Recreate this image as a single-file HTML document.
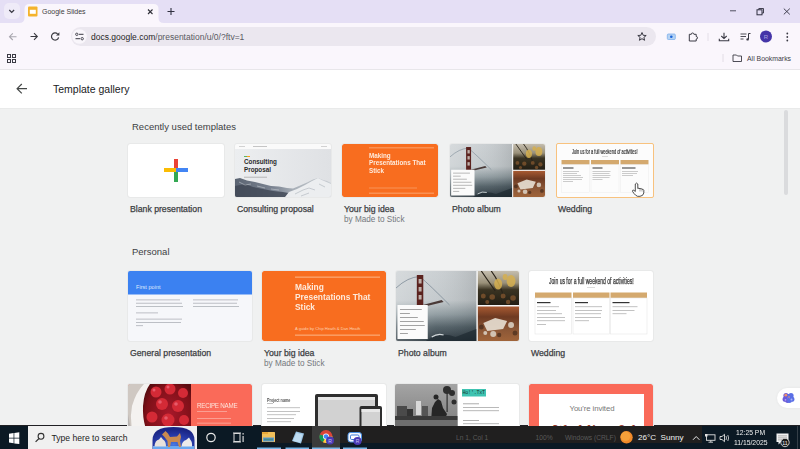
<!DOCTYPE html>
<html><head><meta charset="utf-8">
<style>
*{margin:0;padding:0;box-sizing:border-box}
html,body{width:800px;height:449px;overflow:hidden;font-family:"Liberation Sans",sans-serif;background:#f0f1f1;position:relative}
.a{position:absolute}
#tabs{left:0;top:0;width:800px;height:23px;background:#e5dff5}
#toolbar{left:0;top:22.5px;width:800px;height:47px;background:#faf6fc}
#omni{left:71px;top:27px;width:585px;height:19px;border-radius:10px;background:#ebe7ef}
#header{left:0;top:70px;width:800px;height:38px;background:#fff}
#gallery{left:0;top:108px;width:800px;height:318px;background:#f0f1f1;box-shadow:inset 0 1px 1px rgba(0,0,0,0.03)}
#taskbar{left:0;top:425px;width:800px;height:24px;background:#202024}
.t{white-space:nowrap;color:#202124}
.lbl{position:absolute;white-space:nowrap;font-size:8.7px;color:#3c4043;-webkit-text-stroke:0.25px #3c4043}
.sub{position:absolute;white-space:nowrap;font-size:8.2px;color:#74787d;margin-top:1px}
.card{position:absolute;background:#fff;border-radius:2px;overflow:hidden;outline:1px solid #e8e9e9}
</style></head><body>
<svg width="0" height="0" style="position:absolute">
 <defs>
  <linearGradient id="fog" x1="0" y1="0" x2="0" y2="1"><stop offset="0" stop-color="#c9ced1"/><stop offset="0.42" stop-color="#c2c8cb"/><stop offset="0.62" stop-color="#8e9a9f"/><stop offset="0.8" stop-color="#4f5d64"/><stop offset="1" stop-color="#26323a"/></linearGradient>
  <linearGradient id="fog2" x1="0" y1="0" x2="1" y2="0"><stop offset="0" stop-color="#fff" stop-opacity="0.25"/><stop offset="0.5" stop-color="#fff" stop-opacity="0.05"/><stop offset="1" stop-color="#000" stop-opacity="0.1"/></linearGradient>
  <linearGradient id="leaf" x1="0" y1="0" x2="0" y2="1"><stop offset="0" stop-color="#c4bdae"/><stop offset="0.35" stop-color="#9a917a"/><stop offset="0.55" stop-color="#3a3322"/><stop offset="1" stop-color="#231e14"/></linearGradient>
  <linearGradient id="tbl" x1="0" y1="0" x2="0" y2="1"><stop offset="0" stop-color="#a85a32"/><stop offset="0.3" stop-color="#6e3a22"/><stop offset="0.65" stop-color="#8a5636"/><stop offset="1" stop-color="#a0643a"/></linearGradient>
  <symbol id="album" viewBox="0 0 124 70">
   <rect x="0" y="0" width="81" height="70" fill="url(#fog)"/>
   <rect x="0" y="0" width="81" height="70" fill="url(#fog2)"/>
   <path d="M30 70 Q45 60 60 66 L81 58 V70 Z" fill="#1e2a30" opacity="0.7"/>
   <path d="M36 66 Q42 62 48 64" stroke="#d0d6d8" stroke-width="1.2" fill="none"/>
   <path d="M0 17 Q12 6 24 5.5 Q34 14 54 34" fill="none" stroke="#7e8c98" stroke-width="0.8"/>
   <path d="M27 34 L46 29 L48 31 L27 36 Z" fill="#4a3a38"/>
   <rect x="21" y="4" width="6.5" height="31" fill="#5b231f"/>
   <rect x="22.8" y="8" width="3" height="4.5" fill="#c0b0aa"/><rect x="22.8" y="16" width="3" height="4.5" fill="#c0b0aa"/><rect x="22.8" y="24" width="3" height="4.5" fill="#c0b0aa"/>
   <rect x="1.5" y="34" width="30.5" height="34" fill="#fbfbfb"/>
   <g fill="#8e8e8e"><rect x="4" y="38" width="22" height="0.8"/><rect x="4" y="42" width="10" height="0.8"/><rect x="4" y="46" width="18" height="0.8"/><rect x="4" y="50" width="24" height="0.8"/><rect x="4" y="54" width="25" height="0.8"/><rect x="4" y="58" width="16" height="0.8"/><rect x="4" y="62" width="8" height="0.8"/></g>
   <rect x="82.5" y="0" width="41.5" height="34" fill="url(#leaf)"/>
   <path d="M86 0 L100 20 M96 0 Q104 10 110 30" stroke="#2a241a" stroke-width="1.2" fill="none"/>
   <g fill="#d6b050" opacity="0.85"><ellipse cx="103" cy="13" rx="4" ry="5.5"/><ellipse cx="116" cy="10" rx="4.5" ry="6"/><ellipse cx="110" cy="6" rx="2.5" ry="3"/></g>
   <g fill="#8a5a30" opacity="0.7"><circle cx="88" cy="25" r="2.5"/><circle cx="97" cy="26" r="2.8"/><circle cx="108" cy="25" r="2.5"/><circle cx="118" cy="27" r="2.8"/><circle cx="92" cy="31" r="2"/><circle cx="113" cy="31" r="2.2"/></g>
   <rect x="82.5" y="35.5" width="41.5" height="34.5" fill="url(#tbl)"/>
   <path d="M88 52 L100 47 L112 50 L108 58 L92 60 Z" fill="#e8e0d4" opacity="0.9"/>
   <g fill="#ddd5c8" opacity="0.85"><circle cx="116" cy="54" r="3"/><circle cx="98" cy="63" r="3"/><circle cx="90" cy="62" r="2"/></g>
   <g fill="#3a2418" opacity="0.6"><circle cx="86" cy="56" r="2.5"/><circle cx="104" cy="64" r="2.2"/><circle cx="120" cy="62" r="2.5"/></g>
  </symbol>
 </defs>
</svg>
<div id="tabs" class="a"></div>
<div id="toolbar" class="a"></div>
<div id="omni" class="a"></div>
<div id="header" class="a"></div>
<div id="gallery" class="a"></div>
<div id="taskbar" class="a"></div>

<!-- tab -->
<div class="a" style="left:4px;top:3px;width:16px;height:16px;border-radius:5px;background:#efebf8"></div>
<svg class="a" style="left:0;top:0" width="800" height="70" viewBox="0 0 800 70">
  <path d="M9.3 10 L11.7 12.4 L14.1 10" fill="none" stroke="#3a3a44" stroke-width="1.3"/>
  <path d="M19 23 Q24.5 23 24.5 18 L24.5 9 Q24.5 4 29.5 4 L153.5 4 Q158.5 4 158.5 9 L158.5 18 Q158.5 23 164 23 Z" fill="#faf6fc"/>
  <rect x="28" y="6.5" width="9.5" height="10" rx="1" fill="#f4b32c"/>
  <rect x="29.8" y="9.8" width="6" height="4" fill="#fff"/>
  <path d="M148 9.5 L152.5 14 M152.5 9.5 L148 14" stroke="#303038" stroke-width="1.1"/>
  <path d="M167.5 11.5 H174.5 M171 8 V15" stroke="#303040" stroke-width="1.1"/>
  <path d="M730 10.8 H736" stroke="#404050" stroke-width="0.9"/>
  <rect x="757" y="9.8" width="5" height="5" fill="none" stroke="#303040" stroke-width="1"/>
  <path d="M758.8 9.8 V8.5 H763.5 V13 H762" fill="none" stroke="#303040" stroke-width="0.9"/>
  <path d="M783.8 8.6 L789.8 14.4 M789.8 8.6 L783.8 14.4" stroke="#303040" stroke-width="0.9"/>
  <!-- nav -->
  <path d="M9.5 36.7 H16.5 M12.8 33.3 L9.5 36.7 L12.8 40" fill="none" stroke="#a8a6ae" stroke-width="1.1"/>
  <path d="M30.5 36.5 H37.3 M34 33.2 L37.3 36.5 L34 39.8" fill="none" stroke="#3a3a40" stroke-width="1.1"/>
  <path d="M58.6 37.3 A3.6 3.6 0 1 1 57.6 33.9" fill="none" stroke="#3a3a40" stroke-width="1.2"/>
  <path d="M59.4 32.2 V35.6 H56 Z" fill="#3a3a40"/>
  <!-- site info -->
  <circle cx="79.5" cy="36.5" r="7.3" fill="#f9f6fb"/>
  <path d="M79 34.3 H83.5 M75.5 38.7 H80" stroke="#3a3a44" stroke-width="1"/>
  <circle cx="76.8" cy="34.3" r="1.2" fill="none" stroke="#3a3a44" stroke-width="0.9"/>
  <circle cx="82.2" cy="38.7" r="1.2" fill="none" stroke="#3a3a44" stroke-width="0.9"/>
  <!-- star -->
  <path d="M642 32.5 L643.2 35.3 L646.2 35.5 L643.9 37.4 L644.6 40.3 L642 38.7 L639.4 40.3 L640.1 37.4 L637.8 35.5 L640.8 35.3 Z" fill="none" stroke="#3a3a44" stroke-width="1"/>
  <!-- blue icon -->
  <rect x="667.3" y="34" width="8" height="5.5" rx="1" fill="#b7d3f3" stroke="#7fb0ec" stroke-width="0.8"/>
  <circle cx="671.3" cy="36.8" r="1.3" fill="#1a64d8"/>
  <!-- puzzle -->
  <path d="M689.3 34.3 H691.3 A1.3 1.3 0 0 1 693.9 34.3 H696.2 V36.5 A1.3 1.3 0 0 1 696.2 39.1 V41 H689.3 Z" fill="none" stroke="#3a3a44" stroke-width="1"/>
  <path d="M708 33 V41" stroke="#dedae3" stroke-width="0.8"/>
  <!-- download -->
  <path d="M724 32.8 V38.5 M721.3 36 L724 38.6 L726.7 36 M719.3 38.8 V40.7 H728.7 V38.8" fill="none" stroke="#3a3a44" stroke-width="1.1"/>
  <!-- media -->
  <path d="M740.5 34 H746.5 M740.5 36.5 H746 M740.5 39 H743.5" stroke="#3a3a44" stroke-width="0.9"/>
  <path d="M748.5 33.5 V39.2 M748.5 33.5 H750.5" stroke="#3a3a44" stroke-width="1"/>
  <circle cx="747.6" cy="39.4" r="1.2" fill="#3a3a44"/>
  <!-- avatar -->
  <circle cx="766" cy="36.5" r="6" fill="#4535a8"/>
  <text x="766" y="39" font-size="6" text-anchor="middle" fill="#a9a0e0" font-family="Liberation Sans">R</text>
  <!-- dots -->
  <circle cx="787.3" cy="33.5" r="0.9" fill="#3a3a44"/>
  <circle cx="787.3" cy="37" r="0.9" fill="#3a3a44"/>
  <circle cx="787.3" cy="40.5" r="0.9" fill="#3a3a44"/>
  <!-- apps -->
  <g fill="none" stroke="#3a3a44" stroke-width="1">
  <rect x="7.5" y="54.5" width="3" height="3"/><rect x="12.5" y="54.5" width="3" height="3"/>
  <rect x="7.5" y="59.5" width="3" height="3"/><rect x="12.5" y="59.5" width="3" height="3"/>
  </g>
  <path d="M723 54 V62" stroke="#dcd8e0" stroke-width="0.8"/>
  <path d="M733 55 H736.5 L737.5 56 H741.5 V61.5 H733 Z" fill="none" stroke="#3a3a44" stroke-width="0.9"/>
  <path d="M0 69.5 H800" stroke="#e8e6ea" stroke-width="1"/>
</svg>
<div class="a t" style="left:42px;top:7.5px;font-size:7px;color:#3c3c3c">Google Slides</div>
<div class="a t" style="left:747px;top:54.7px;font-size:6.9px;color:#3c3c44">All Bookmarks</div>

<!-- url -->
<div class="a t" style="left:91px;top:31.7px;font-size:8.5px;color:#1f1f1f">docs.google.com<span style="color:#5a5a62">/presentation/u/0/?ftv=1</span></div>

<!-- header -->
<svg class="a" style="left:0;top:70px" width="40" height="37"><path d="M17.3 18.7 H27 M21.8 14 L17.1 18.7 L21.8 23.4" fill="none" stroke="#444746" stroke-width="1.2"/></svg>
<div class="a t" style="left:53px;top:83px;font-size:10.5px;color:#202124">Template gallery</div>
<div class="a" style="left:783.7px;top:110px;width:4.5px;height:85px;border-radius:3px;background:#dadbdd"></div>

<!-- recently used -->
<div class="a t" style="left:132px;top:121px;font-size:9.5px;color:#3c4043">Recently used templates</div>

<div class="card" style="left:128px;top:144px;width:96px;height:53px">
 <svg width="96" height="53" style="position:absolute;left:0;top:0">
  <rect x="46" y="15" width="4" height="11" fill="#ea4335"/>
  <rect x="46" y="26" width="4" height="12" fill="#34a853"/>
  <rect x="36" y="24" width="12" height="4" fill="#fbbc04"/>
  <rect x="48" y="24" width="12" height="4" fill="#4285f4"/>
 </svg>
</div>
<div class="a lbl" style="left:130px;top:204px">Blank presentation</div>

<div class="card" style="left:235px;top:144px;width:96px;height:53px;background:linear-gradient(90deg,#eceef0,#dfe1e4)">
 <svg width="96" height="53" style="position:absolute;left:0;top:0">
  <rect x="0" y="0" width="96" height="5" fill="#fafafa"/>
  <rect x="4" y="2" width="6" height="0.8" fill="#c8c8c8"/><rect x="18" y="2" width="14" height="0.8" fill="#b8b8b8"/><rect x="86" y="2" width="6" height="0.8" fill="#c8c8c8"/>
  <rect x="9" y="12" width="3" height="0.9" fill="#4caf50"/><rect x="12" y="12" width="3" height="0.9" fill="#ff9800"/>
  <rect x="9" y="32.8" width="23" height="0.7" fill="#a0a0a0"/>
  <defs><linearGradient id="mt" x1="0" y1="0" x2="1" y2="0"><stop offset="0" stop-color="#5b6472"/><stop offset="0.4" stop-color="#7b8492"/><stop offset="0.62" stop-color="#a9b0b8"/><stop offset="1" stop-color="#c9ced3"/></linearGradient></defs>
  <path d="M0 35 L5 34 L12 36.5 L20 38 L28 40 L36 42 L44 42.5 L52 44 L58 44.5 L64 42 L72 38.5 L78 35.5 L83 34 L88 36 L92 37 L96 39 V53 H0 Z" fill="url(#mt)"/>
  <path d="M0 42 L10 40 L18 43 L28 45 L38 47 L48 48 L56 49.5 L60 53 L0 53 Z" fill="#3e4654" opacity="0.8"/>
  <path d="M54 48 L62 45 L70 41 L77 37 L83 34 L88 36.5 L96 40 V53 H50 Z" fill="#eceef0"/>
  <path d="M60 50 L68 46 L74 44 L80 46 M84 40 L90 43 M66 52 L74 49" fill="none" stroke="#b4bac1" stroke-width="0.7"/>
  <path d="M4 38 L10 41 L16 40 M22 42 L30 44 M36 45 L44 46" fill="none" stroke="#c7ccd2" stroke-width="0.7" opacity="0.8"/>
 </svg>
 <div class="a" style="left:9px;top:14px;font-size:6.3px;font-weight:bold;color:#2a2a2a;line-height:7.5px">Consulting<br>Proposal</div>
</div>
<div class="a lbl" style="left:237px;top:204px">Consulting proposal</div>

<div class="card" style="left:342px;top:144px;width:96px;height:53px;background:#f86d1f">
 <svg width="96" height="53" style="position:absolute;left:0;top:0">
  <rect x="27" y="3.6" width="65" height="0.6" fill="#fcc9a4"/>
  <rect x="27" y="48.8" width="65" height="0.6" fill="#fcc9a4"/>
  <rect x="27" y="43.7" width="48" height="0.6" fill="#fbbf95" opacity="0.8"/>
 </svg>
 <div class="a" style="left:27px;top:7.7px;font-size:6.3px;font-weight:bold;color:#feeadb;line-height:6.75px;white-space:nowrap;transform:scaleY(1.1);transform-origin:0 0">Making<br>Presentations That<br>Stick</div>
</div>
<div class="a lbl" style="left:344px;top:204px">Your big idea</div>
<div class="a sub" style="left:344px;top:214px">by Made to Stick</div>

<div class="card" style="left:450px;top:144px;width:95px;height:53px;background:#f6f6f6">
 <svg width="95" height="53" style="position:absolute;left:0;top:0" viewBox="0 0 124 70" preserveAspectRatio="none"><use href="#album"/></svg>
</div>
<div class="a lbl" style="left:452px;top:204px">Photo album</div>

<div class="card" style="left:557px;top:144px;width:96px;height:53px;outline:1.5px solid #f8c27e;background:#fcfcfc;border-radius:1px">
 <div class="a" style="left:15px;top:4px;font-size:7px;color:#333;white-space:nowrap;transform:scaleX(0.558);-webkit-text-stroke:0.2px #333;transform-origin:0 0">Join us for a full weekend of activities!</div>
 <svg width="96" height="54" style="position:absolute;left:0;top:0">
  <rect x="45" y="12.5" width="6" height="0.5" fill="#bbb"/>
  <g fill="#d4a96e"><rect x="4.5" y="16" width="28" height="4.5"/><rect x="34" y="16" width="28" height="4.5"/><rect x="63.5" y="16" width="28" height="4.5"/></g>
  <g fill="none" stroke="#ececec" stroke-width="0.5"><rect x="4.5" y="20.5" width="28" height="28"/><rect x="34" y="20.5" width="28" height="28"/><rect x="63.5" y="20.5" width="28" height="28"/></g>
  <g fill="#333"><rect x="6" y="23.5" width="10.5" height="1"/><rect x="35.5" y="23.5" width="10" height="1"/><rect x="65" y="23.5" width="13.5" height="1"/></g>
  <g fill="#9a9a9a">
   <rect x="6" y="27" width="16" height="0.5"/><rect x="6" y="29" width="14" height="0.5"/><rect x="6" y="31" width="18" height="0.5"/><rect x="6" y="33" width="20" height="0.5"/><rect x="6" y="35" width="19" height="0.5"/><rect x="6" y="37" width="10" height="0.5"/>
   <rect x="35.5" y="27" width="18" height="0.5"/><rect x="35.5" y="29" width="17" height="0.5"/><rect x="35.5" y="31" width="18" height="0.5"/><rect x="35.5" y="33" width="17" height="0.5"/><rect x="35.5" y="35" width="10" height="0.5"/>
   <rect x="65" y="27" width="16" height="0.5"/><rect x="65" y="29" width="15" height="0.5"/><rect x="65" y="31" width="11" height="0.5"/>
  </g>
  <path d="M78.3 47 V40 Q79.5 38.2 80.8 40 V44.5 Q82 43.6 83 44.8 Q84.2 44 85 45.3 Q86.2 44.8 86.8 46.2 V49 Q86.2 52 83 52.3 H80.5 Q78.5 51.5 77 49.5 L75.5 47.3 Q75.3 45.8 76.8 46.2 L78.3 47.5 Z" fill="#fff" stroke="#222" stroke-width="0.8"/>
  <path d="M83 44.8 V47.5 M85 45.3 V47.5" stroke="#555" stroke-width="0.5"/>
 </svg>
</div>
<div class="a lbl" style="left:558px;top:204px">Wedding</div>

<!-- personal -->
<div class="a t" style="left:132px;top:246px;font-size:9.5px;color:#3c4043">Personal</div>

<div class="card" style="left:128px;top:271px;width:124px;height:70px;background:#f6f7fa">
 <svg width="124" height="70" style="position:absolute;left:0;top:0">
  <rect x="0" y="0" width="124" height="23.5" fill="#3b81f1"/>
  <g fill="#aeb1b8">
   <rect x="8" y="28.5" width="44" height="0.8"/><rect x="8" y="31.8" width="46" height="0.8"/><rect x="8" y="35.1" width="47" height="0.8"/>
   <rect x="8" y="41.5" width="22" height="0.8"/>
   <rect x="8" y="47.7" width="46" height="0.8"/><rect x="8" y="51" width="45" height="0.8"/><rect x="8" y="54.3" width="7" height="0.8"/>
   <rect x="65" y="28.5" width="45" height="0.8"/><rect x="65" y="31.8" width="44" height="0.8"/><rect x="65" y="35.1" width="46" height="0.8"/>
  </g>
 </svg>
 <div class="a t" style="left:8px;top:13.2px;font-size:5.6px;color:#dce7fd">First point</div>
</div>
<div class="a lbl" style="left:130px;top:348px">General presentation</div>

<div class="card" style="left:262px;top:271px;width:124px;height:70px;background:#f86d1f">
 <svg width="124" height="70" style="position:absolute;left:0;top:0">
  <rect x="33" y="5.7" width="85" height="0.8" fill="#fcc9a4"/>
  <rect x="33" y="63.7" width="85" height="0.8" fill="#fcc9a4"/>
 </svg>
 <div class="a" style="left:33px;top:10.5px;font-size:8.4px;font-weight:bold;color:#feeadb;line-height:9.7px;transform:scaleY(1.08);transform-origin:0 0;white-space:nowrap">Making<br>Presentations That<br>Stick</div>
 <div class="a" style="left:33px;top:54.5px;font-size:4.1px;color:#fcd1b2;white-space:nowrap">A guide by Chip Heath &amp; Dan Heath</div>
</div>
<div class="a lbl" style="left:264px;top:348px">Your big idea</div>
<div class="a sub" style="left:264px;top:358px">by Made to Stick</div>

<div class="card" style="left:396px;top:271px;width:123px;height:70px;background:#f6f6f6">
 <svg width="123" height="70" style="position:absolute;left:0;top:0" viewBox="0 0 124 70" preserveAspectRatio="none"><use href="#album"/></svg>
</div>
<div class="a lbl" style="left:398px;top:348px">Photo album</div>

<div class="card" style="left:529px;top:271px;width:124px;height:70px">
 <div class="a" style="left:20px;top:5px;font-size:8.5px;color:#333;white-space:nowrap;transform:scaleX(0.593);-webkit-text-stroke:0.25px #333;transform-origin:0 0">Join us for a full weekend of activities!</div>
 <svg width="124" height="70" style="position:absolute;left:0;top:0">
  <rect x="58" y="16.5" width="8" height="0.5" fill="#bbb"/>
  <g fill="#d4a96e"><rect x="6" y="21.5" width="36.5" height="5.5"/><rect x="44" y="21.5" width="36.5" height="5.5"/><rect x="81.5" y="21.5" width="36.5" height="5.5"/></g>
  <g fill="none" stroke="#e6e6e6" stroke-width="0.6"><rect x="6" y="27" width="36.5" height="36"/><rect x="44" y="27" width="36.5" height="36"/><rect x="81.5" y="27" width="36.5" height="36"/></g>
  <g fill="#333"><rect x="8" y="31" width="13.5" height="1.2"/><rect x="46" y="31" width="13" height="1.2"/><rect x="83.5" y="31" width="17" height="1.2"/></g>
  <g fill="#9a9a9a">
   <rect x="8" y="35.5" width="22" height="0.6"/><rect x="8" y="39" width="19" height="0.6"/><rect x="8" y="42.5" width="25" height="0.6"/><rect x="8" y="46" width="28" height="0.6"/><rect x="8" y="49.5" width="28" height="0.6"/><rect x="8" y="53" width="9" height="0.6"/>
   <rect x="46" y="35.5" width="27" height="0.6"/><rect x="46" y="39" width="27" height="0.6"/><rect x="46" y="42.5" width="26" height="0.6"/><rect x="46" y="46" width="26" height="0.6"/><rect x="46" y="49.5" width="14" height="0.6"/>
   <rect x="83.5" y="35.5" width="25" height="0.6"/><rect x="83.5" y="39" width="22" height="0.6"/><rect x="83.5" y="42.5" width="14" height="0.6"/>
  </g>
 </svg>
</div>
<div class="a lbl" style="left:531px;top:348px">Wedding</div>

<!-- third row -->
<div class="card" style="left:128px;top:384px;width:124px;height:60px;background:#fa6a59">
 <svg width="124" height="60" style="position:absolute;left:0;top:0">
  <defs><radialGradient id="rb" cx="0.55" cy="0.5" r="0.6"><stop offset="0" stop-color="#a8182a"/><stop offset="0.8" stop-color="#7e1018"/><stop offset="1" stop-color="#5a0c10"/></radialGradient></defs>
  <rect x="0" y="0" width="63" height="60" fill="#cfc8c2"/>
  <path d="M0 0 H63 V60 H10 Q0 42 4 22 Q8 8 16 0 Z" fill="#f4f2f0"/>
  <path d="M0 30 Q2 48 12 60 H0 Z" fill="#b8b4b2"/>
  <path d="M20 0 H63 V60 H26 Q14 44 15 22 Q16 8 22 0 Z" fill="url(#rb)"/>
  <g fill="#d42a36" style="filter:blur(0.6px)"><circle cx="28" cy="8" r="5.5"/><circle cx="42" cy="5" r="5.5"/><circle cx="55" cy="9" r="5"/><circle cx="34" cy="20" r="6"/><circle cx="50" cy="22" r="6"/><circle cx="24" cy="33" r="5.5"/><circle cx="40" cy="36" r="6.5"/><circle cx="56" cy="36" r="5"/><circle cx="32" cy="50" r="6"/><circle cx="48" cy="52" r="6"/></g>
  <g fill="#f07080" opacity="0.7"><circle cx="26" cy="6" r="1.5"/><circle cx="40" cy="3" r="1.5"/><circle cx="32" cy="18" r="1.8"/><circle cx="48" cy="20" r="1.8"/><circle cx="38" cy="34" r="1.8"/><circle cx="30" cy="48" r="1.8"/><circle cx="46" cy="50" r="1.5"/></g>
  <g fill="#fde0d8" opacity="0.75"><rect x="69" y="27.3" width="30" height="0.6"/><rect x="69" y="34.3" width="34" height="0.6"/><rect x="69" y="38.8" width="34" height="0.6"/></g>
 </svg>
 <div class="a t" style="left:68.5px;top:17px;font-size:7.8px;color:#fde3da;letter-spacing:-0.3px;transform:scaleX(0.8);transform-origin:0 0">RECIPE NAME</div>
</div>

<div class="card" style="left:262px;top:384px;width:124px;height:60px">
 <svg width="124" height="60" style="position:absolute;left:0;top:0">
  <rect x="5" y="19" width="6" height="0.6" fill="#999"/>
  <g fill="#9a9a9a"><rect x="5" y="23.5" width="33" height="0.6"/><rect x="5" y="27" width="33" height="0.6"/><rect x="5" y="30.5" width="29" height="0.6"/><rect x="5" y="34" width="27" height="0.6"/><rect x="5" y="37.5" width="24" height="0.6"/></g>
  <rect x="53" y="10" width="63" height="50" rx="2" fill="#2e2e2e"/>
  <rect x="56" y="13" width="57" height="47" fill="#d2d2d2"/>
  <rect x="56" y="13" width="57" height="3" fill="#e6e6e6"/>
  <rect x="97.5" y="22" width="22.5" height="38" rx="2" fill="#2e2e2e"/>
  <rect x="99.5" y="25" width="18.5" height="35" fill="#d2d2d2"/>
  <rect x="99.5" y="25" width="18.5" height="3" fill="#e8e8e8"/>
 </svg>
 <div class="a t" style="left:5px;top:11.5px;font-size:6.2px;font-weight:bold;color:#555;transform:scaleX(0.6);transform-origin:0 0">Project name</div>
</div>

<div class="card" style="left:395px;top:384px;width:124px;height:60px">
 <svg width="124" height="60" style="position:absolute;left:0;top:0">
  <defs><linearGradient id="sk" x1="0" y1="0" x2="0" y2="1"><stop offset="0" stop-color="#a4a4a4"/><stop offset="0.5" stop-color="#8a8a8a"/><stop offset="1" stop-color="#5a5a5a"/></linearGradient></defs>
  <rect x="0" y="0" width="62.5" height="60" fill="url(#sk)"/>
  <g fill="#2e2e2e"><circle cx="52" cy="6" r="4"/><circle cx="57" cy="9" r="3"/><rect x="51.5" y="8" width="1.2" height="20"/><circle cx="59" cy="18" r="2.5"/></g>
  <rect x="2" y="22" width="10" height="10" fill="#4a4a4a"/><rect x="12" y="25" width="6" height="7" fill="#333"/><rect x="21" y="17" width="5" height="14" fill="#d8d8d8"/><rect x="27" y="22" width="6" height="10" fill="#555"/>
  <path d="M36 38 L37 24 L40 18 L43 15 L46 17 L48 24 L52 30 L49 38 Z" fill="#262626"/>
  <circle cx="41" cy="13" r="2.5" fill="#262626"/>
  <rect x="0" y="32" width="62.5" height="4" fill="#3a3a3a"/>
  <path d="M0 36 H62.5 V60 H0 Z" fill="#6e6e6e"/>
  <path d="M10 42 H50 L46 48 H14 Z" fill="#8e8e8e"/>
  <rect x="67" y="5" width="24" height="7.5" fill="#3fc3b1"/>
  <g fill="#8a8a8a"><rect x="68" y="19.5" width="16" height="0.7"/><rect x="68" y="23" width="36" height="0.6"/><rect x="68" y="26.5" width="36" height="0.6"/><rect x="68" y="36" width="16" height="0.7"/><rect x="68" y="39.5" width="36" height="0.6"/></g>
 </svg>
 <div class="a t" style="left:67.5px;top:6px;font-size:5px;color:#1a3a36;font-family:'Liberation Mono',monospace;letter-spacing:-0.2px">Ho!'.TxT</div>
</div>

<div class="card" style="left:529px;top:384px;width:124px;height:60px;background:#fa6a59">
 <div class="a" style="left:10px;top:10px;width:105px;height:50px;background:#fff"></div>
 <div class="a t" style="left:40.5px;top:20px;font-size:7.8px;color:#777;letter-spacing:-0.1px">You're invited</div>
 <div class="a t" style="left:24px;top:39px;font-size:14px;color:#9a3a2c;letter-spacing:1px;font-family:'Liberation Serif',serif;font-weight:bold">Wedding 8th</div>
</div>

<!-- gemini pill -->
<div class="a" style="left:777px;top:387.5px;width:40px;height:20.5px;border-radius:10px;background:#fff;box-shadow:0 0 3px rgba(0,0,0,0.06)"></div>
<svg class="a" style="left:782px;top:392px" width="13" height="12">
  <g fill="#6a5ad8"><circle cx="4" cy="3.6" r="2.6"/><circle cx="3.2" cy="7.2" r="2.6"/><circle cx="5.5" cy="8.8" r="2.3"/></g>
  <g fill="#5b6fe6"><circle cx="9" cy="3.6" r="2.6"/><circle cx="9.8" cy="7.2" r="2.6"/><circle cx="7.5" cy="8.8" r="2.3"/><rect x="5.5" y="2" width="2" height="8"/></g>
  <circle cx="3.8" cy="3.2" r="1.4" fill="#f0906a"/><circle cx="7" cy="5" r="0.9" fill="#f0906a" opacity="0.7"/>
  <circle cx="9.5" cy="7.5" r="1" fill="#a8b4f4"/><circle cx="3.5" cy="7.8" r="0.9" fill="#b0a0f0"/>
</svg>

<!-- taskbar -->
<div class="a" style="left:0;top:426px;width:800px;height:23px;background:#0b1924"></div>
<div class="a" style="left:261px;top:426px;width:441px;height:17px;background:#201f1f"></div>
<div class="a t" style="left:456px;top:434px;font-size:6.7px;color:#5a5a5a">Ln 1, Col 1</div>
<div class="a t" style="left:535.5px;top:434px;font-size:6.7px;color:#5a5a5a">100%</div>
<div class="a t" style="left:565px;top:434px;font-size:6.7px;color:#5a5a5a">Windows (CRLF)</div>
<div class="a" style="left:28px;top:426px;width:169px;height:23px;background:#f0f0f0"></div>
<div class="a t" style="left:51.5px;top:432.5px;font-size:8.6px;color:#222">Type here to search</div>
<div class="a" style="left:312px;top:426px;width:28px;height:23px;background:#3b3b3b"></div>
<svg class="a" style="left:0;top:426px" width="800" height="23" viewBox="0 426 800 23">
  <g fill="#fff"><path d="M9 428.2 L13.6 427.5 V432.3 H9 Z" transform="translate(0,5.5)"/><path d="M14.3 427.4 L19.3 426.7 V432.3 H14.3 Z" transform="translate(0,5.5)"/><path d="M9 433 H13.6 V437.8 L9 437.1 Z" transform="translate(0,5.5)"/><path d="M14.3 433 H19.3 V438.6 L14.3 437.9 Z" transform="translate(0,5.5)"/></g>
  <circle cx="41" cy="436.3" r="2.9" fill="none" stroke="#333" stroke-width="1.1"/>
  <path d="M39 438.5 L35.6 441.9" stroke="#333" stroke-width="1.2"/>
  <!-- dog doodle -->
  <defs><radialGradient id="dome" cx="0.5" cy="0.8" r="0.7"><stop offset="0" stop-color="#4a7ae0"/><stop offset="0.5" stop-color="#2a3fb0"/><stop offset="1" stop-color="#1a2584"/></radialGradient></defs>
  <path d="M152.5 449 V440 Q152.5 427 173.5 427 Q194.5 427 194.5 440 V449 Z" fill="url(#dome)"/>
  <rect x="153" y="446" width="41" height="3" fill="#6aa8f0"/>
  <path d="M162 434.5 L165.5 431 L168 433.5 L170 437 L177 436.5 L180 433 L181 437 L180 441 L181 447 L179 447 L177.5 442 L171 442 L170 447 L168 447 L167.5 441 L164.5 437 Z" fill="#c98a50"/>
  <path d="M154.5 446.5 Q155 440 159 439.5 L161 437 L163 439.5 Q166 441 166 446.5 Z" fill="#e8e2dc"/>
  <path d="M181.5 446.5 Q182 441 186 440 L189 437.5 L190.5 440 Q192.5 442 192 446.5 Z" fill="#ecebea"/>
  <!-- cortana -->
  <circle cx="211" cy="437.5" r="4.2" fill="none" stroke="#e8e8e8" stroke-width="1.2"/>
  <!-- task view -->
  <g fill="none" stroke="#d8d8d8" stroke-width="1"><rect x="234" y="433.5" width="6" height="8"/></g>
  <path d="M233 433 H241 M233 442 H241" stroke="#d8d8d8" stroke-width="1"/>
  <rect x="242.5" y="433" width="1.2" height="1.6" fill="#d8d8d8"/><rect x="242.5" y="436" width="1.2" height="6" fill="#d8d8d8"/>
  <!-- explorer -->
  <rect x="262" y="432" width="13" height="10" rx="0.5" fill="#f3c05a"/>
  <rect x="262" y="432" width="6" height="2" fill="#e8a838"/>
  <rect x="263" y="437.5" width="11" height="4" fill="#5c9ad8"/>
  <rect x="264" y="438.5" width="9" height="2" fill="#4a8c8a"/>
  <!-- notepad-ish -->
  <path d="M292 441 L296 431.5 L304 433.5 L301 443.5 Z" fill="#9cc6e6"/>
  <path d="M293 441 L296.5 433 L302.5 434.5 L300 442.5 Z" fill="#cfe5f5" opacity="0.7"/>
  <!-- chrome -->
  <circle cx="326" cy="436.5" r="6.5" fill="#db4437"/>
  <path d="M326 436.5 L319.8 434.5 A6.5 6.5 0 0 0 323 442.3 Z" fill="#0f9d58"/>
  <path d="M326 436.5 L323 442.3 A6.5 6.5 0 0 0 332.5 436.5 Z" fill="#ffcd40"/>
  <circle cx="326" cy="436.5" r="3" fill="#fff"/><circle cx="326" cy="436.5" r="2.3" fill="#4285f4"/>
  <circle cx="330" cy="440.5" r="4" fill="#4b3ab5"/>
  <text x="330" y="442.6" font-size="5" text-anchor="middle" fill="#c8c0f0" font-family="Liberation Sans">R</text>
  <!-- remote app -->
  <rect x="348" y="432.5" width="13.5" height="9.5" rx="2.5" fill="#f4f8ff" stroke="#4a90e2" stroke-width="1"/>
  <rect x="350.5" y="435" width="8.5" height="4.5" rx="1.2" fill="#fff" stroke="#3b78d8" stroke-width="1"/>
  <circle cx="357.5" cy="441" r="4" fill="#4b3ab5"/>
  <text x="357.5" y="443.1" font-size="5" text-anchor="middle" fill="#c8c0f0" font-family="Liberation Sans">R</text>
  <!-- underlines -->
  <g fill="#78b6e8"><rect x="257" y="447.5" width="24" height="1.5"/><rect x="285.5" y="447.5" width="23.5" height="1.5"/><rect x="312" y="447.5" width="28" height="1.5"/><rect x="343" y="447.5" width="24" height="1.5"/></g>
  <!-- weather -->
  <circle cx="626.5" cy="437.3" r="6.2" fill="#f18a2a"/>
  <circle cx="625.5" cy="436.3" r="4.8" fill="#f5a03a"/>
  <path d="M693 439.8 L696.2 436.5 L699.4 439.8" fill="none" stroke="#e8e8e8" stroke-width="1"/>
  <!-- network monitor -->
  <rect x="706.5" y="434.8" width="8.5" height="5.5" fill="none" stroke="#e0e0e0" stroke-width="0.9"/>
  <path d="M710.8 440.3 V442 M708.5 442.2 H713" stroke="#e0e0e0" stroke-width="0.9"/>
  <rect x="705" y="434" width="2.5" height="2.5" fill="#e0e0e0"/>
  <!-- volume -->
  <path d="M720 436.5 H722 L724.5 434.3 V441.7 L722 439.5 H720 Z" fill="none" stroke="#e0e0e0" stroke-width="0.9"/>
  <path d="M726 436 Q727 438 726 440 M727.8 435 Q729.5 438 727.8 441" fill="none" stroke="#e0e0e0" stroke-width="0.8"/>
  <!-- notification -->
  <path d="M776.5 433.5 H788.5 V442 H781 L778.5 444.5 V442 H776.5 Z" fill="#f2f2f2"/>
  <g fill="#9a9a9a"><rect x="778" y="435.5" width="9" height="0.8"/><rect x="778" y="437.5" width="9" height="0.8"/><rect x="778" y="439.5" width="6" height="0.8"/></g>
  <circle cx="785" cy="442.5" r="4.2" fill="#1c1c1c" stroke="#e8e8e8" stroke-width="0.8"/>
  <text x="785" y="444.5" font-size="5.2" text-anchor="middle" fill="#f0f0f0" font-family="Liberation Sans">11</text>
  <path d="M797.5 426 V449" stroke="#505860" stroke-width="0.6"/>
</svg>
<div class="a t" style="left:638px;top:432.5px;font-size:8.1px;color:#f0f0f0">26°C</div>
<div class="a t" style="left:660.5px;top:432.5px;font-size:8.1px;color:#f0f0f0">Sunny</div>
<div class="a t" style="left:736.3px;top:427.5px;font-size:7.8px;color:#f0f0f0;transform:scaleX(0.87);transform-origin:0 0">12:25 PM</div>
<div class="a t" style="left:734px;top:438.3px;font-size:7.8px;color:#f0f0f0;transform:scaleX(0.87);transform-origin:0 0">11/15/2025</div>
</body></html>
